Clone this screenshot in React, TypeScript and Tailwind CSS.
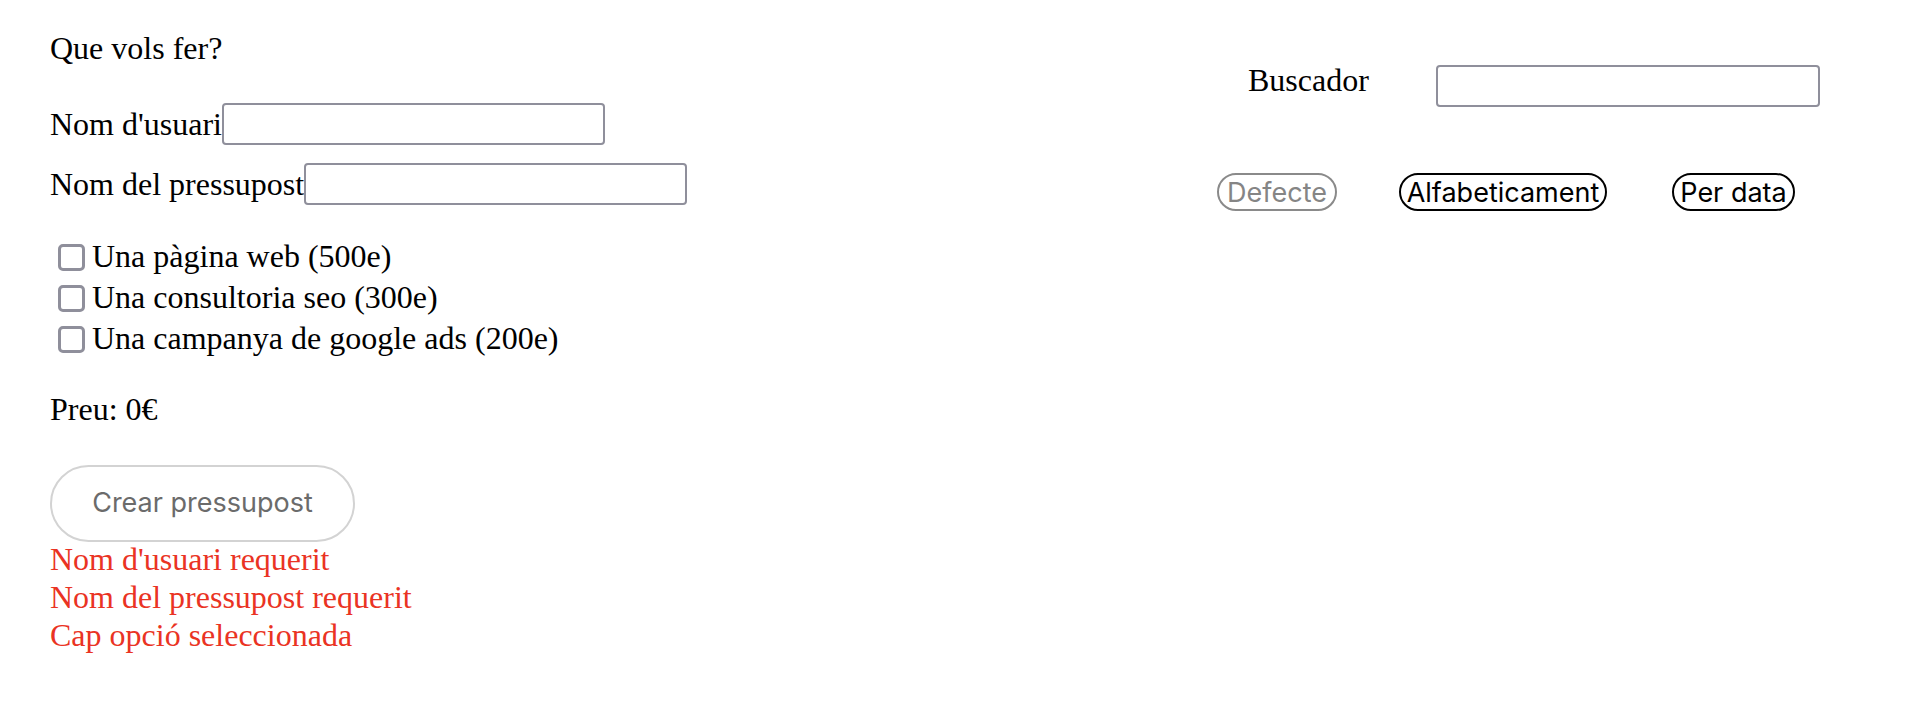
import React, { useState } from 'react';

const serveis = [
  { id: 'web', label: 'Una pàgina web (500e)', preu: 500 },
  { id: 'seo', label: 'Una consultoria seo (300e)', preu: 300 },
  { id: 'ads', label: 'Una campanya de google ads (200e)', preu: 200 },
];

const errors = ["Nom d'usuari requerit", 'Nom del pressupost requerit', 'Cap opció seleccionada'];

const Casella: React.FC<{ label: string }> = ({ label }) => (
  <label className="flex items-start h-[41px]">
    <span className="mt-[6px] ml-[8px] mr-[7px] w-[27px] h-[27px] shrink-0 rounded-[5px] border-[3px] border-[#8f8f9b] bg-white" />
    <span className="leading-[37px]">{label}</span>
  </label>
);

const App: React.FC = () => {
  const [ordre, setOrdre] = useState('defecte');

  const pill = (key: string, text: string, extra: string) => (
    <button
      type="button"
      onClick={() => setOrdre(key)}
      className={`${extra} h-[38px] rounded-full border-2 bg-white flex items-center justify-center font-['Inter'] text-[27px] leading-none ${
        ordre === key ? 'border-[#8a8a8a] text-[#858585]' : 'border-black text-black'
      }`}
    >
      {text}
    </button>
  );

  return (
    <div className="flex min-h-screen bg-white text-black font-['Liberation_Serif',serif] text-[32px]">
      <div className="w-[1217px] shrink-0 pl-[50px] pt-[30px]">
        <p className="leading-[37px]">Que vols fer?</p>

        <div className="mt-[36px] flex items-center h-[42px]">
          <span className="leading-[37px]">Nom d'usuari</span>
          <input type="text" className="w-[383px] h-[42px] rounded-[4px] border-2 border-[#8f8f9b] bg-white px-2 outline-none" />
        </div>
        <div className="mt-[18px] flex items-center h-[42px]">
          <span className="leading-[37px]">Nom del pressupost</span>
          <input type="text" className="w-[383px] h-[42px] rounded-[4px] border-2 border-[#8f8f9b] bg-white px-2 outline-none" />
        </div>

        <div className="mt-[33px] flex flex-col">
          {serveis.map((s) => (
            <Casella key={s.id} label={s.label} />
          ))}
        </div>

        <p className="mt-[30px] leading-[37px]">Preu: 0€</p>

        <button
          type="button"
          className="mt-[37px] w-[305px] h-[77px] rounded-full border-2 border-[#d3d3d3] bg-white font-['Inter'] text-[27px] text-[#6b6b6b]"
        >
          Crear pressupost
        </button>

        <div className="-mt-[2px] text-[#ea3323]">
          {errors.map((e) => (
            <p key={e} className="leading-[38px]">
              {e}
            </p>
          ))}
        </div>
      </div>

      <div className="flex-1 pt-[62px]">
        <div className="flex items-start">
          <span className="ml-[31px] w-[188px] leading-[37px]">Buscador</span>
          <input type="text" className="mt-[3px] w-[384px] h-[42px] rounded-[4px] border-2 border-[#8f8f9b] bg-white px-2 outline-none" />
        </div>
        <div className="mt-[66px] flex">
          {pill('defecte', 'Defecte', 'w-[120px]')}
          {pill('alfa', 'Alfabeticament', 'ml-[62px] w-[208px]')}
          {pill('data', 'Per data', 'ml-[65px] w-[123px]')}
        </div>
      </div>
    </div>
  );
};

export default App;
